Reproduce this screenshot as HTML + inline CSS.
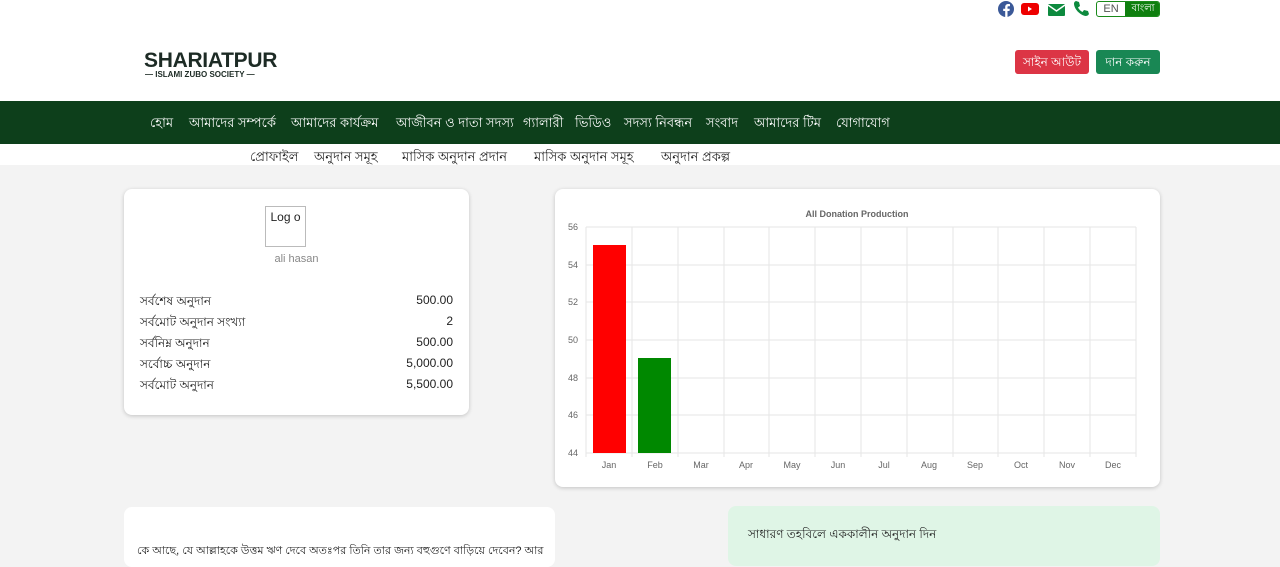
<!DOCTYPE html>
<html><head><meta charset="utf-8"><style>
*{margin:0;padding:0;box-sizing:border-box}
body{width:1280px;height:552px;overflow:hidden;background:#f3f3f3;font-family:"Liberation Sans","Noto Sans CJK SC",sans-serif;position:relative;color:#222}
.a{position:absolute}
.top{left:0;top:0;width:1280px;height:101px;background:#fff}
.nav{left:0;top:101px;width:1280px;height:43px;background:#0d3f1b;color:#fff;font-size:13px;white-space:nowrap}
.nav span{position:absolute;top:13px}
.sub{left:0;top:144px;width:1280px;height:21px;background:#fff;font-size:13px;white-space:nowrap}
.card{background:#fff;border-radius:8px;box-shadow:0 1px 4px rgba(0,0,0,.2)}
.row{position:absolute;left:16px;right:16px;font-size:12px;display:flex;justify-content:space-between}
</style></head><body>
<div class="a top"></div>
<svg class="a" style="left:997px;top:0" width="70" height="18" viewBox="0 0 70 18">
<circle cx="9" cy="9" r="8" fill="#3b5998"/><path d="M10.5 17v-6h2l.3-2.3h-2.3V7.3c0-.7.2-1.1 1.1-1.1H13V4.1c-.3 0-1-.1-1.8-.1-1.8 0-3 1.1-3 3v1.7h-2V11h2v6z" fill="#fff"/>
<rect x="24" y="3" width="18" height="12" rx="3" fill="#e00"/><path d="M31 6.5v5l4-2.5z" fill="#fff"/>
<rect x="51" y="4" width="17" height="12" rx="1" fill="#0d8a3e"/><path d="M51 5l8.5 6 8.5-6" stroke="#fff" stroke-width="1.5" fill="none"/>
</svg>
<svg class="a" style="left:1073px;top:0" width="16" height="16" viewBox="0 0 16 16"><path d="M3 1l3 1 1 4-2 1.5c1 2 2.5 3.5 4.5 4.5L11 10l4 1 1 3c-1 1.5-2 2-3.5 2C7 15 1 9 1 3.5 1 2.3 2 1.3 3 1z" fill="#0d8a3e"/></svg>
<div class="a" style="left:1096px;top:1px;width:64px;height:16px;border:1px solid #1a8a1a;border-radius:3px;font-size:11px;overflow:hidden">
<span class="a" style="left:0;top:0;width:28px;height:14px;text-align:center;color:#555;line-height:14px">EN</span>
<span class="a" style="left:28px;top:0;width:36px;height:14px;background:#0f7f0f;color:#fff;text-align:center;line-height:14px;font-size:10px">বাংলা</span></div>
<div class="a" style="left:144px;top:51px;font-weight:bold;font-size:21px;color:#1d2b25;letter-spacing:-.3px;line-height:20px">SHARIATPUR</div>
<div class="a" style="left:145px;top:70px;font-weight:bold;font-size:8px;color:#1d2b25;white-space:nowrap;line-height:9px">— ISLAMI ZUBO SOCIETY —</div>
<div class="a" style="left:1015px;top:50px;width:74px;height:24px;background:#dc3545;border-radius:3px;color:#fff;font-size:12px;text-align:center;line-height:24px">সাইন আউট</div>
<div class="a" style="left:1096px;top:50px;width:64px;height:24px;background:#198754;border-radius:3px;color:#fff;font-size:12px;text-align:center;line-height:24px">দান করুন</div>
<div class="a nav"><span style="left:150px">হোম</span><span style="left:189px">আমাদের সম্পর্কে</span><span style="left:291px">আমাদের কার্যক্রম</span><span style="left:396px">আজীবন ও দাতা সদস্য</span><span style="left:523px">গ্যালারী</span><span style="left:575px">ভিডিও</span><span style="left:624px">সদস্য নিবন্ধন</span><span style="left:706px">সংবাদ</span><span style="left:754px">আমাদের টিম</span><span style="left:836px">যোগাযোগ</span></div>
<div class="a sub"><span class="a" style="left:250px;top:4px">প্রোফাইল</span><span class="a" style="left:314px;top:4px">অনুদান সমূহ</span><span class="a" style="left:402px;top:4px">মাসিক অনুদান প্রদান</span><span class="a" style="left:534px;top:4px">মাসিক অনুদান সমূহ</span><span class="a" style="left:661px;top:4px">অনুদান প্রকল্প</span></div>
<div class="a card" style="left:124px;top:189px;width:345px;height:226px">
<div class="a" style="left:141px;top:17px;width:41px;height:41px;border:1px solid #bbb;font-size:12px;text-align:center;padding-top:3px">Log o</div>
<div class="a" style="left:0;width:345px;top:64px;text-align:center;font-size:11px;color:#888">ali hasan</div>
<div class="row" style="top:104px"><span>সর্বশেষ অনুদান</span><span>500.00</span></div>
<div class="row" style="top:125px"><span>সর্বমোট অনুদান সংখ্যা</span><span>2</span></div>
<div class="row" style="top:146px"><span>সর্বনিম্ন অনুদান</span><span>500.00</span></div>
<div class="row" style="top:167px"><span>সর্বোচ্চ অনুদান</span><span>5,000.00</span></div>
<div class="row" style="top:188px"><span>সর্বমোট অনুদান</span><span>5,500.00</span></div>
</div>
<div class="a card" style="left:555px;top:189px;width:605px;height:298px"></div>
<svg class="a" style="left:555px;top:189px" width="605" height="298" font-family="Liberation Sans" font-size="9" fill="#666">
<text x="302" y="28" text-anchor="middle" font-weight="bold" font-size="9">All Donation Production</text>
<g stroke="#e6e6e6">
<line x1="31" x2="581" y1="38" y2="38"/><line x1="31" x2="581" y1="76" y2="76"/><line x1="31" x2="581" y1="113" y2="113"/><line x1="31" x2="581" y1="151" y2="151"/><line x1="31" x2="581" y1="189" y2="189"/><line x1="31" x2="581" y1="226" y2="226"/><line x1="31" x2="581" y1="264" y2="264"/>
<line x1="31" x2="31" y1="38" y2="268"/><line x1="77" x2="77" y1="38" y2="268"/><line x1="123" x2="123" y1="38" y2="268"/><line x1="169" x2="169" y1="38" y2="268"/><line x1="214" x2="214" y1="38" y2="268"/><line x1="260" x2="260" y1="38" y2="268"/><line x1="306" x2="306" y1="38" y2="268"/><line x1="352" x2="352" y1="38" y2="268"/><line x1="398" x2="398" y1="38" y2="268"/><line x1="443" x2="443" y1="38" y2="268"/><line x1="489" x2="489" y1="38" y2="268"/><line x1="535" x2="535" y1="38" y2="268"/><line x1="581" x2="581" y1="38" y2="268"/></g>
<rect x="38" y="56" width="33" height="208" fill="#f00"/><rect x="83" y="169" width="33" height="95" fill="#080"/>
<g text-anchor="end"><text x="23" y="41">56</text><text x="23" y="79">54</text><text x="23" y="116">52</text><text x="23" y="154">50</text><text x="23" y="192">48</text><text x="23" y="229">46</text><text x="23" y="267">44</text></g>
<g text-anchor="middle"><text x="54" y="279">Jan</text><text x="100" y="279">Feb</text><text x="146" y="279">Mar</text><text x="191" y="279">Apr</text><text x="237" y="279">May</text><text x="283" y="279">Jun</text><text x="329" y="279">Jul</text><text x="374" y="279">Aug</text><text x="420" y="279">Sep</text><text x="466" y="279">Oct</text><text x="512" y="279">Nov</text><text x="558" y="279">Dec</text></g>
</svg>
<div class="a card" style="left:124px;top:507px;width:431px;height:60px;box-shadow:none;overflow:hidden"><div class="a" style="left:13px;top:35px;font-size:11px;white-space:nowrap">কে আছে, যে আল্লাহকে উত্তম ঋণ দেবে অতঃপর তিনি তার জন্য বহুগুণে বাড়িয়ে দেবেন? আর</div></div>
<div class="a" style="left:728px;top:506px;width:432px;height:60px;background:#dff5e6;border-radius:8px"><div class="a" style="left:20px;top:20px;font-size:12px">সাধারণ তহবিলে এককালীন অনুদান দিন</div></div>
</body></html>
